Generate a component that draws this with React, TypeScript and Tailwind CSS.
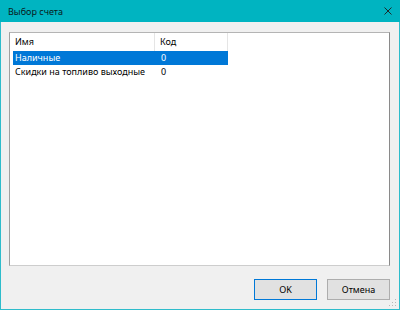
import React from "react";

const rows = [
  { name: "Наличные", code: "0", selected: true },
  { name: "Скидки на топливо выходные", code: "0", selected: false },
];

export default function App() {
  return (
    <div
      className="w-[400px] h-[310px] bg-[#2ebccb] flex flex-col text-[9px] text-black"
      style={{ fontFamily: '"Noto Sans", "Liberation Sans", sans-serif' }}
    >
      <div className="h-[22px] bg-[#00b4c1] flex items-center pl-[8px] pr-[8px] shrink-0">
        <span className="flex-1 leading-none text-[#0a1a1c]">Выбор счета</span>
        <svg width="8" height="8" viewBox="0 0 8 8">
          <path d="M0.5 0.5 L7.5 7.5 M7.5 0.5 L0.5 7.5" stroke="#1b2b2d" strokeWidth="1" />
        </svg>
      </div>
      <div className="flex-1 mx-[1px] mb-[1px] bg-[#f0f0f0] flex flex-col relative">
        <div className="mt-[10px] ml-[8px] w-[381px] h-[234px] bg-white border-l border-t border-l-[#a0a0a0] border-t-[#b4b4b4] border-r border-r-[#8a8a8a] border-b border-b-[#cdcdcd] flex flex-col">
          <div className="h-[18px] flex items-center shrink-0">
            <div className="w-[145px] pl-[5px] h-full flex items-center border-r border-[#e5e5e5]">Имя</div>
            <div className="w-[73px] pl-[5px] h-full flex items-center border-r border-[#e5e5e5]">Код</div>
          </div>
          {rows.map((r) => (
            <div
              key={r.name}
              className={
                "ml-[3px] w-[215px] h-[14px] flex items-center " +
                (r.selected ? "bg-[#0078d7] text-white" : "")
              }
            >
              <div className="w-[142px] pl-[2px] whitespace-nowrap">{r.name}</div>
              <div className="pl-[6px]">{r.code}</div>
            </div>
          ))}
        </div>
        <div className="mt-[13px] flex justify-end gap-[10px] pr-[9px]">
          <button className="w-[63px] h-[21px] bg-[#e1e1e1] border border-[#0078d7] flex items-center justify-center leading-none">
            OK
          </button>
          <button className="w-[63px] h-[21px] bg-[#e1e1e1] border border-[#adadad] flex items-center justify-center leading-none">
            Отмена
          </button>
        </div>
        <svg width="8" height="8" viewBox="0 0 8 8" className="absolute right-[2px] bottom-[2px]">
          <rect x="6" y="0" width="1" height="1" fill="#b8b8b8" />
          <rect x="3" y="3" width="1" height="1" fill="#b8b8b8" />
          <rect x="6" y="3" width="1" height="1" fill="#b8b8b8" />
          <rect x="0" y="6" width="1" height="1" fill="#b8b8b8" />
          <rect x="3" y="6" width="1" height="1" fill="#b8b8b8" />
          <rect x="6" y="6" width="1" height="1" fill="#b8b8b8" />
        </svg>
      </div>
    </div>
  );
}
